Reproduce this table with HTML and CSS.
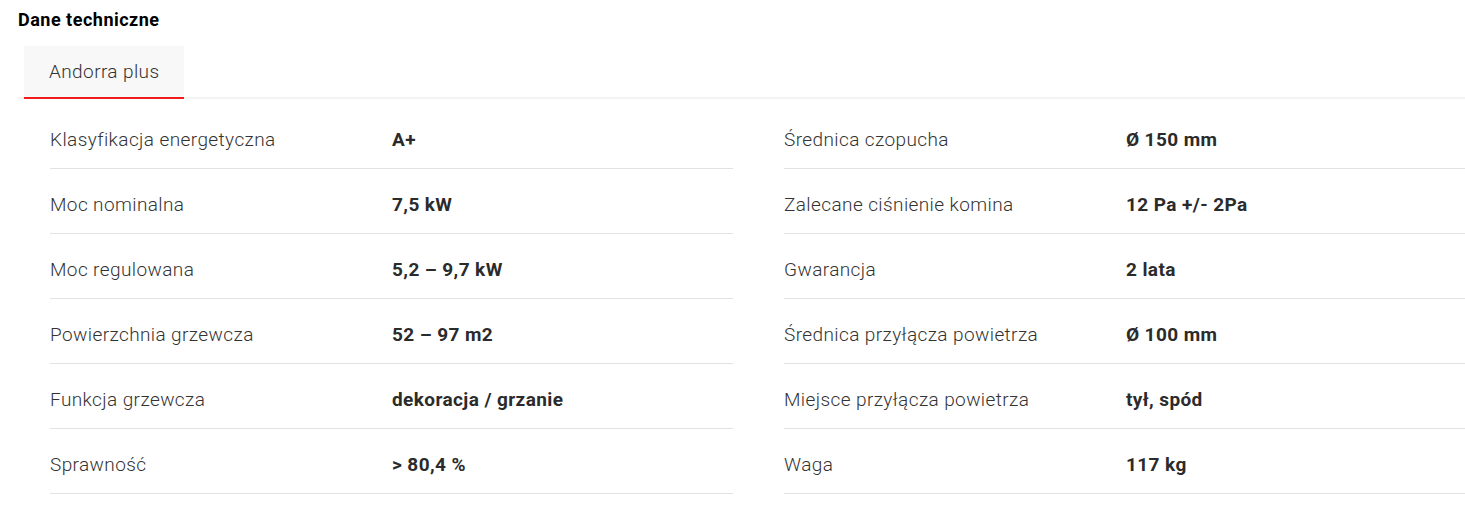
FILE: index.html
```html
<!DOCTYPE html>
<html lang="pl">
<head>
    <meta charset="UTF-8">
    <meta name="viewport" content="width=device-width, initial-scale=1.0">
    <title>Dane techniczne</title>
    <link rel="stylesheet" href="styles.css">
</head>
<body>
    <!-- Section title -->
    <h2 class="section-title">Dane techniczne</h2>

    <!-- Tabs -->
    <div class="tabs">
        <a href="#" class="tab active">Andorra plus</a>
    </div>

    <!-- Specs -->
    <div class="specs">
        <div class="spec-col">
            <div class="spec-row"><span class="spec-label">Klasyfikacja energetyczna</span><span class="spec-value">A+</span></div>
            <div class="spec-row"><span class="spec-label">Moc nominalna</span><span class="spec-value">7,5 kW</span></div>
            <div class="spec-row"><span class="spec-label">Moc regulowana</span><span class="spec-value">5,2 – 9,7 kW</span></div>
            <div class="spec-row"><span class="spec-label">Powierzchnia grzewcza</span><span class="spec-value">52 – 97 m2</span></div>
            <div class="spec-row"><span class="spec-label">Funkcja grzewcza</span><span class="spec-value">dekoracja / grzanie</span></div>
            <div class="spec-row"><span class="spec-label">Sprawność</span><span class="spec-value">&gt; 80,4 %</span></div>
        </div>
        <div class="spec-col">
            <div class="spec-row"><span class="spec-label">Średnica czopucha</span><span class="spec-value">Ø 150 mm</span></div>
            <div class="spec-row"><span class="spec-label">Zalecane ciśnienie komina</span><span class="spec-value">12 Pa +/- 2Pa</span></div>
            <div class="spec-row"><span class="spec-label">Gwarancja</span><span class="spec-value">2 lata</span></div>
            <div class="spec-row"><span class="spec-label">Średnica przyłącza powietrza</span><span class="spec-value">Ø 100 mm</span></div>
            <div class="spec-row"><span class="spec-label">Miejsce przyłącza powietrza</span><span class="spec-value">tył, spód</span></div>
            <div class="spec-row"><span class="spec-label">Waga</span><span class="spec-value">117 kg</span></div>
        </div>
    </div>
</body>
</html>
```

FILE: styles.css
```css
* {
    margin: 0;
    padding: 0;
    box-sizing: border-box;
}
body {
    background-color: #fff;
    font-family: Roboto, "Liberation Sans", sans-serif;
    color: #333;
    overflow: hidden;
}
/* Title */
.section-title {
    padding: 10px 0 0 18px;
    font-size: 18px;
    line-height: 20px;
    font-weight: 700;
    letter-spacing: 0.5px;
    color: #000;
}
/* Tabs */
.tabs {
    display: flex;
    margin: 16px 0 0 17px;
    padding-left: 7px;
    border-bottom: 2px solid #f3f3f3;
}
.tab {
    display: block;
    padding: 0 25px;
    height: 53px;
    line-height: 51px;
    margin-bottom: -2px;
    background-color: #f8f8f8;
    border-bottom: 2px solid #ee1c1c;
    font-size: 19px;
    font-weight: 300;
    letter-spacing: 0.4px;
    color: #333;
    text-decoration: none;
}
/* Specs table */
.specs {
    display: grid;
    grid-template-columns: 683px 683px;
    column-gap: 51px;
    padding: 5px 0 0 50px;
}
.spec-row {
    display: grid;
    grid-template-columns: 342px 1fr;
    height: 65px;
    padding-top: 25px;
    border-bottom: 1px solid #e2e2e2;
    font-size: 19px;
    line-height: 21px;
    letter-spacing: 0.4px;
}
.spec-label {
    font-weight: 300;
    color: #333;
}
.spec-value {
    font-weight: 700;
    color: #2b2b2b;
}
```
